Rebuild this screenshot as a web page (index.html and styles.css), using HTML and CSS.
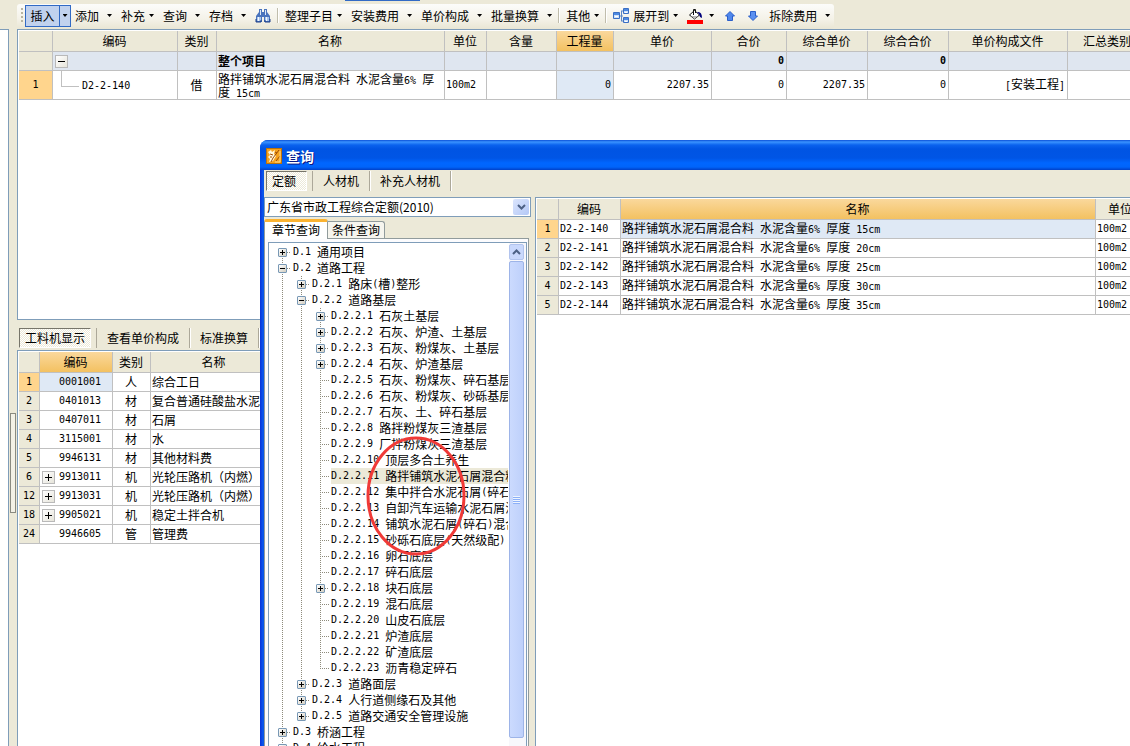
FILE: index.html
```html
<!DOCTYPE html>
<html lang="zh-CN">
<head>
<meta charset="utf-8">
<title>查询</title>
<link rel="stylesheet" href="styles.css">
</head>
<body>
<div class="app">
  <aside class="side"></aside>
  <div class="gutter"><div class="splitter"></div></div>
  <main class="work">
    <header class="top">
      <div class="toolbar">
        <span class="grip"></span>
        <div class="split"><button class="split-main">插入</button><button class="split-drop" aria-label="插入选项"><i class="arrow"></i></button></div>
        <button class="tool wide">添加<i class="arrow"></i></button>
        <button class="tool">补充<i class="arrow"></i></button>
        <button class="tool wide">查询<i class="arrow"></i></button>
        <button class="tool wide">存档<i class="arrow"></i></button>
        <button class="tool" aria-label="查找"><svg width="16" height="16" viewBox="0 0 16 16"><path d="M4 1h3v3h2V1h3v3l3 4v6H9V9H7v5H1V8l3-4z" fill="#4a74bd"/><path d="M2 9h4v4H2zM10 9h4v4h-4z" fill="#a9c5ea"/><path d="M5 2h1v5H5zM10 2h1v5h-1z" fill="#dbe8f8"/><path d="M1 11v3h5v-2M10 12v2h5v-3" fill="none" stroke="#1c3f87"/><path d="M3 9h1v4H3zM11 9h1v4h-1z" fill="#f2f7ff"/></svg></button>
        <span class="sep"></span>
        <button class="tool">整理子目<i class="arrow"></i></button>
        <button class="tool wide">安装费用<i class="arrow"></i></button>
        <button class="tool wide">单价构成<i class="arrow"></i></button>
        <button class="tool wide">批量换算<i class="arrow"></i></button>
        <span class="sep"></span>
        <button class="tool">其他<i class="arrow"></i></button>
        <span class="sep"></span>
        <button class="tool"><svg width="16" height="16" viewBox="0 0 16 16"><path d="M6 8h4M8.500 3v10M8 3h3M8 13h3" fill="none" stroke="#5b86c8"/><g fill="#cfe2fa" stroke="#3a6fc4"><path d="M.5 4.500h6v6h-6zM10.500.500h5v5h-5zM10.500 9.500h5v5h-5z"/></g><path d="M1 5h5v2H1zM11 1h4v2h-4zM11 10h4v2h-4z" fill="#4f8ae0"/><path d="M2 8h3v1H2zM12 4h2v1h-2zM12 13h2v1h-2z" fill="#fff"/></svg>展开到<i class="arrow"></i></button>
        <button class="tool color" aria-label="填充颜色"><svg width="16" height="16" viewBox="0 0 16 16"><path d="M2.500 7l5-4.500 5 4.500-5 4z" fill="#fff" stroke="#111"/><path d="M4 8h7l-3.500 3z" fill="#b8b8b8"/><path d="M6.500 7V1.500h2V5" fill="none" stroke="#111"/><path d="M10 4q5-1 5 6l-2-1q0-3-3-5z" fill="#00007b"/><path d="M0 12h16v4H0z" fill="#f00"/></svg><i class="arrow"></i></button>
        <button class="tool nav" aria-label="上移"><svg width="14" height="12" viewBox="0 0 14 12"><path d="M7 1.500l4.500 4.500H9.500v4.500h-5V6H2.500z" fill="#4f87ec" stroke="#2b5fc9"/></svg></button>
        <button class="tool nav" aria-label="下移"><svg width="14" height="12" viewBox="0 0 14 12"><path d="M7 10.500L2.500 6h2V1.500h5V6h2z" fill="#5b90f0" stroke="#2b5fc9"/></svg></button>
        <button class="tool wide">拆除费用<i class="arrow"></i></button>
      </div>
    </header>
    <section class="pane upper">
      <table class="grid project">
        <colgroup><col class="w34"><col class="w125"><col class="w39"><col class="w228"><col class="w42"><col class="w70"><col class="w57"><col class="w98"><col class="w75"><col class="w81"><col class="w81"><col class="w119"><col class="w80"></colgroup>
        <thead><tr><th></th><th>编码</th><th>类别</th><th>名称</th><th>单位</th><th>含量</th><th class="hot">工程量</th><th>单价</th><th>合价</th><th>综合单价</th><th>综合合价</th><th>单价构成文件</th><th>汇总类别</th></tr></thead>
        <tbody>
          <tr class="total"><td class="no"></td><td><button class="fold minus" aria-label="折叠"></button></td><td></td><td>整个项目</td><td></td><td></td><td></td><td></td><td class="num">0</td><td></td><td class="num">0</td><td></td><td></td></tr>
          <tr class="item"><td class="no cur">1</td><td class="child"><span class="l">D2-2-140</span></td><td class="mid">借</td><td class="wrap">路拌铺筑水泥石屑混合料<span class="l"> </span>水泥含量<span class="l">6% </span>厚度<span class="l"> 15cm</span></td><td class="l">100m2</td><td></td><td class="num sel">0</td><td class="num">2207.35</td><td class="num">0</td><td class="num">2207.35</td><td class="num">0</td><td class="right"><span class="l">[</span>安装工程<span class="l">]</span></td><td></td></tr>
        </tbody>
      </table>
    </section>
    <nav class="tabs low"><button class="tab on">工料机显示</button><button class="tab">查看单价构成</button><button class="tab">标准换算</button></nav>
    <section class="pane lower">
      <table class="grid parts">
        <colgroup><col class="w21"><col class="w73"><col class="w38"><col class="w127"></colgroup>
        <thead><tr><th></th><th class="hot">编码</th><th>类别</th><th>名称</th></tr></thead>
        <tbody>
          <tr><td class="no cur">1</td><td class="code sel">0001001</td><td class="mid">人</td><td>综合工日</td></tr>
          <tr><td class="no">2</td><td class="code">0401013</td><td class="mid">材</td><td>复合普通硅酸盐水泥</td></tr>
          <tr><td class="no">3</td><td class="code">0407011</td><td class="mid">材</td><td>石屑</td></tr>
          <tr><td class="no">4</td><td class="code">3115001</td><td class="mid">材</td><td>水</td></tr>
          <tr><td class="no">5</td><td class="code">9946131</td><td class="mid">材</td><td>其他材料费</td></tr>
          <tr><td class="no">6</td><td class="code"><button class="fold plus" aria-label="展开"></button>9913011</td><td class="mid">机</td><td>光轮压路机（内燃）</td></tr>
          <tr><td class="no">12</td><td class="code"><button class="fold plus" aria-label="展开"></button>9913031</td><td class="mid">机</td><td>光轮压路机（内燃）</td></tr>
          <tr><td class="no">18</td><td class="code"><button class="fold plus" aria-label="展开"></button>9905021</td><td class="mid">机</td><td>稳定土拌合机</td></tr>
          <tr><td class="no">24</td><td class="code">9946605</td><td class="mid">管</td><td>管理费</td></tr>
        </tbody>
      </table>
    </section>
  </main>
</div>
<span class="accent"></span>

<div class="dialog" role="dialog" aria-labelledby="dialog-title">
  <header class="title">
    <svg width="16" height="16" viewBox="0 0 16 16"><path d="M0 0h16v16H0z" fill="#b9720c"/><path d="M1 1h14v14H1z" fill="#f6a21c"/><path d="M2 4l3-2 1 2 3-2-1 4 2 2-3 5-4 1 1-3-2-2 2-2z" fill="#fff7dc"/><path d="M13 2L7 10l-2 4M4 6l3 1M4 9l2 0M10 13l4-5M9 4l2 1" fill="none" stroke="#9a4a06"/><path d="M14 3v11H9" fill="none" stroke="#fbd98a"/></svg>
    <h1 id="dialog-title">查询</h1>
  </header>
  <div class="frame">
    <nav class="tabs high"><button class="tab on">定额</button><button class="tab">人材机</button><button class="tab">补充人材机</button></nav>
    <div class="body">
      <div class="left">
        <label class="combo"><select aria-label="定额库"><option>广东省市政工程综合定额(2010)</option></select><span class="drop"><svg width="9" height="6" viewBox="0 0 9 6"><path d="M1 1l3.500 3.500L8 1" fill="none" stroke="#4d6185" stroke-width="2"/></svg></span></label>
        <div class="pages"><button class="page on">章节查询</button><button class="page">条件查询</button></div>
        <div class="sheet">
          <div class="treebox">
            <ul class="tree">
              <li><div class="row"><button class="box"></button><i class="dots"></i><span class="l">D.1 </span>通用项目</div></li>
              <li><div class="row"><button class="box open"></button><i class="dots"></i><span class="l">D.2 </span>道路工程</div>
                <ul>
                  <li><div class="row"><button class="box"></button><i class="dots"></i><span class="l">D.2.1 </span>路床<span class="l">(</span>槽<span class="l">)</span>整形</div></li>
                  <li><div class="row"><button class="box open"></button><i class="dots"></i><span class="l">D.2.2 </span>道路基层</div>
                    <ul>
                      <li><div class="row"><button class="box"></button><i class="dots"></i><span class="l">D.2.2.1 </span>石灰土基层</div></li>
                      <li><div class="row"><button class="box"></button><i class="dots"></i><span class="l">D.2.2.2 </span>石灰、炉渣、土基层</div></li>
                      <li><div class="row"><button class="box"></button><i class="dots"></i><span class="l">D.2.2.3 </span>石灰、粉煤灰、土基层</div></li>
                      <li><div class="row"><button class="box"></button><i class="dots"></i><span class="l">D.2.2.4 </span>石灰、炉渣基层</div></li>
                      <li><div class="row"><i class="dots leaf"></i><span class="l">D.2.2.5 </span>石灰、粉煤灰、碎石基层</div></li>
                      <li><div class="row"><i class="dots leaf"></i><span class="l">D.2.2.6 </span>石灰、粉煤灰、砂砾基层</div></li>
                      <li><div class="row"><i class="dots leaf"></i><span class="l">D.2.2.7 </span>石灰、土、碎石基层</div></li>
                      <li><div class="row"><i class="dots leaf"></i><span class="l">D.2.2.8 </span>路拌粉煤灰三渣基层</div></li>
                      <li><div class="row"><i class="dots leaf"></i><span class="l">D.2.2.9 </span>厂拌粉煤灰三渣基层</div></li>
                      <li><div class="row"><i class="dots leaf"></i><span class="l">D.2.2.10 </span>顶层多合土养生</div></li>
                      <li><div class="row"><i class="dots leaf"></i><span class="picked"><span class="l">D.2.2.11 </span>路拌铺筑水泥石屑混合料</span></div></li>
                      <li><div class="row"><i class="dots leaf"></i><span class="l">D.2.2.12 </span>集中拌合水泥石屑<span class="l">(</span>碎石</div></li>
                      <li><div class="row"><i class="dots leaf"></i><span class="l">D.2.2.13 </span>自卸汽车运输水泥石屑混</div></li>
                      <li><div class="row"><i class="dots leaf"></i><span class="l">D.2.2.14 </span>铺筑水泥石屑<span class="l">(</span>碎石<span class="l">)</span>混合</div></li>
                      <li><div class="row"><i class="dots leaf"></i><span class="l">D.2.2.15 </span>砂砾石底层<span class="l">(</span>天然级配<span class="l">)</span></div></li>
                      <li><div class="row"><i class="dots leaf"></i><span class="l">D.2.2.16 </span>卵石底层</div></li>
                      <li><div class="row"><i class="dots leaf"></i><span class="l">D.2.2.17 </span>碎石底层</div></li>
                      <li><div class="row"><button class="box"></button><i class="dots"></i><span class="l">D.2.2.18 </span>块石底层</div></li>
                      <li><div class="row"><i class="dots leaf"></i><span class="l">D.2.2.19 </span>混石底层</div></li>
                      <li><div class="row"><i class="dots leaf"></i><span class="l">D.2.2.20 </span>山皮石底层</div></li>
                      <li><div class="row"><i class="dots leaf"></i><span class="l">D.2.2.21 </span>炉渣底层</div></li>
                      <li><div class="row"><i class="dots leaf"></i><span class="l">D.2.2.22 </span>矿渣底层</div></li>
                      <li><div class="row"><i class="dots leaf"></i><span class="l">D.2.2.23 </span>沥青稳定碎石</div></li>
                    </ul>
                  </li>
                  <li><div class="row"><button class="box"></button><i class="dots"></i><span class="l">D.2.3 </span>道路面层</div></li>
                  <li><div class="row"><button class="box"></button><i class="dots"></i><span class="l">D.2.4 </span>人行道侧缘石及其他</div></li>
                  <li><div class="row"><button class="box"></button><i class="dots"></i><span class="l">D.2.5 </span>道路交通安全管理设施</div></li>
                </ul>
              </li>
              <li><div class="row"><button class="box"></button><i class="dots"></i><span class="l">D.3 </span>桥涵工程</div></li>
              <li><div class="row"><button class="box"></button><i class="dots"></i><span class="l">D.4 </span>给水工程</div></li>
            </ul>
            <div class="scroll">
              <button class="scroll-up" aria-label="向上滚动"><svg width="9" height="6" viewBox="0 0 9 6"><path d="M1 5l3.500-3.500L8 5" fill="none" stroke="#4d6185" stroke-width="2"/></svg></button>
              <div class="thumb"><i class="ridges"></i></div>
            </div>
          </div>
        </div>
      </div>
      <section class="pane result">
        <table class="grid quota">
          <colgroup><col class="w22"><col class="w62"><col><col class="w50"></colgroup>
          <thead><tr><th></th><th>编码</th><th class="hot">名称</th><th>单位</th></tr></thead>
          <tbody>
            <tr><td class="no cur">1</td><td class="l">D2-2-140</td><td class="sel">路拌铺筑水泥石屑混合料<span class="l"> </span>水泥含量<span class="l">6% </span>厚度<span class="l"> 15cm</span></td><td class="l">100m2</td></tr>
            <tr><td class="no">2</td><td class="l">D2-2-141</td><td>路拌铺筑水泥石屑混合料<span class="l"> </span>水泥含量<span class="l">6% </span>厚度<span class="l"> 20cm</span></td><td class="l">100m2</td></tr>
            <tr><td class="no">3</td><td class="l">D2-2-142</td><td>路拌铺筑水泥石屑混合料<span class="l"> </span>水泥含量<span class="l">6% </span>厚度<span class="l"> 25cm</span></td><td class="l">100m2</td></tr>
            <tr><td class="no">4</td><td class="l">D2-2-143</td><td>路拌铺筑水泥石屑混合料<span class="l"> </span>水泥含量<span class="l">6% </span>厚度<span class="l"> 30cm</span></td><td class="l">100m2</td></tr>
            <tr><td class="no">5</td><td class="l">D2-2-144</td><td>路拌铺筑水泥石屑混合料<span class="l"> </span>水泥含量<span class="l">6% </span>厚度<span class="l"> 35cm</span></td><td class="l">100m2</td></tr>
          </tbody>
        </table>
      </section>
    </div>
  </div>
  <svg class="mark" width="100" height="120" viewBox="0 0 100 120"><ellipse cx="50" cy="60" rx="48" ry="58" fill="none" stroke="#f03a37" stroke-width="3"/></svg>
</div>
</body>
</html>
```
FILE: styles.css
```css
* { box-sizing: border-box; }
html, body { height: 100%; }
body {
  margin: 0;
  overflow: hidden;
  position: relative;
  background: #ece9d8;
  color: #000;
  font: 12px/16px "Noto Sans CJK SC", sans-serif;
}
button, select {
  margin: 0;
  padding: 0;
  border: 0;
  background: none;
  color: inherit;
  font: inherit;
  white-space: nowrap;
}
svg { display: block; flex: none; }

/* half-width characters, six pixels each */
.l, .num, .code, .no { font-family: "DejaVu Sans Mono", monospace; font-size: 10px; white-space: pre; }

/* application window */
.app { display: flex; height: 100%; }
.side { width: 9px; margin-top: 29px; background: #fff; border: 1px solid #7f9db9; border-left: 0; border-bottom: 0; flex: none; }
.gutter { width: 8px; flex: none; display: flex; flex-direction: column; justify-content: center; padding-top: 180px; }
.splitter { width: 6px; height: 100px; margin-left: 1px; border: 1px solid #8a8a80; background: #f3f1e6; }
.work { flex: 1; min-width: 0; display: flex; flex-direction: column; }
.accent { position: absolute; left: 345px; top: 0; width: 75px; height: 1px; background: #316ac5; }

.top { height: 29px; padding-top: 4px; flex: none; display: flex; }
.toolbar {
  display: flex;
  align-items: center;
  gap: 9px;
  padding: 0 4px 2px;
  border-radius: 3px;
  background: linear-gradient(#fcfcfa, #f4f2e8 60%, #e9e6d4);
}
.grip { width: 2px; height: 15px; margin-right: -7px; background: repeating-linear-gradient(#b8b5a2 0 2px, transparent 2px 4px); }
.split { display: flex; height: 22px; margin-right: -5px; border: 1px solid #316ac5; background: #c1d2ee; }
.split-main { width: 33px; }
.split-drop { width: 11px; border-left: 1px solid #316ac5; display: flex; align-items: center; justify-content: center; }
.arrow { width: 5px; height: 3px; background: #000; clip-path: polygon(0 0, 100% 0, 50% 100%); flex: none; }
.tool { display: flex; align-items: center; gap: 4px; height: 22px; }
.tool.wide { gap: 8px; }
.tool.color { gap: 6px; }
.sep { width: 2px; height: 15px; margin: 0 -3px; border-left: 1px solid #c0bdac; border-right: 1px solid #fff; }

.pane { background: #fff; border: 1px solid #7f9db9; border-right: 0; padding: 1px 0 0 1px; overflow: hidden; }
.upper { height: 39vh; flex: none; }
.lower { flex: 1; border-bottom: 0; }

/* grids */
.grid { table-layout: fixed; border-collapse: separate; border-spacing: 0; }
.grid th, .grid td {
  height: 19px;
  padding: 0 2px 0 1px;
  border-right: 1px solid #c0c0c0;
  border-bottom: 1px solid #c0c0c0;
  font-weight: 400;
  line-height: 16px;
  text-align: left;
  white-space: nowrap;
  overflow: hidden;
}
.grid th { height: 21px; background: #ece9d8; text-align: center; }
.grid th.hot { background: linear-gradient(#fad89c, #f3c161); }
.grid td.no { background: #ece9d8; text-align: center; padding: 0; }
.grid td.no.cur { background: #ffd58d; }
.grid td.sel { background: #dfe9f5; }
.grid td.mid { text-align: center; }
.grid td.num, .grid td.right { text-align: right; }
.grid td.code { padding-left: 19px; position: relative; }
.grid tr.total td { background: #dfe6f0; font-weight: 700; }
.grid tr.total td.no { background: #ece9d8; }
.grid tr.item td { height: 29px; }
.grid tr.item td.wrap { white-space: normal; line-height: 13px; }
.wrap .l { line-height: 1px; }
.project { width: 1129px; }
.parts { width: 259px; }
.quota { width: calc(100% + 16px); }
.w21 { width: 21px; } .w22 { width: 22px; } .w34 { width: 34px; } .w38 { width: 38px; }
.w39 { width: 39px; } .w42 { width: 42px; } .w50 { width: 50px; } .w57 { width: 57px; }
.w62 { width: 62px; } .w70 { width: 70px; } .w73 { width: 73px; } .w75 { width: 75px; }
.w80 { width: 80px; } .w81 { width: 81px; } .w98 { width: 98px; } .w119 { width: 119px; }
.w125 { width: 125px; } .w127 { width: 127px; } .w228 { width: 228px; }

.fold {
  display: block;
  width: 13px;
  height: 13px;
  margin-left: 1px;
  border: 1px solid #b9b9b9;
  background:
    linear-gradient(#000, #000) center / 7px 1px no-repeat,
    linear-gradient(135deg, #fff, #e6e4da);
}
.fold.plus {
  position: absolute;
  left: 1px;
  top: 3px;
  background:
    linear-gradient(#000, #000) center / 7px 1px no-repeat,
    linear-gradient(#000, #000) center / 1px 7px no-repeat,
    linear-gradient(135deg, #fff, #e6e4da);
}
.grid td.child { padding-left: 29px; position: relative; }
.child::before {
  content: "";
  position: absolute;
  left: 8px;
  top: 0;
  width: 17px;
  height: 15px;
  border-left: 1px solid #c0c0c0;
  border-bottom: 1px solid #c0c0c0;
}

/* flat tab strips */
.tabs { display: flex; align-items: center; flex: none; }
.low { height: 30px; padding: 6px 0 0 2px; }
.high { height: 27px; padding: 0 0 6px 2px; }
.tab { height: 20px; padding: 0 10px; border-right: 1px solid #aca899; box-shadow: 1px 0 0 #fff; }
.tab.on {
  margin-right: 6px;
  padding: 0 5px;
  border: 1px solid;
  border-color: #77756a #fff #fff #77756a;
  background: repeating-conic-gradient(#fff 0 25%, #ece9d8 0 50%) 0 0 / 2px 2px;
  box-shadow: none;
  position: relative;
}
.high .tab.on { padding-right: 10px; }
.tab.on::after { content: ""; position: absolute; right: -7px; top: -1px; width: 1px; height: 20px; background: #aca899; }

/* query dialog */
.dialog {
  position: absolute;
  left: 260px;
  top: 140px;
  right: 0;
  bottom: 0;
  display: flex;
  flex-direction: column;
  border-radius: 8px 0 0 0;
  background: linear-gradient(90deg, #0831d9, #0a58ee 3px, #0855dd 4px);
  overflow: hidden;
}
.title {
  height: 30px;
  flex: none;
  display: flex;
  align-items: center;
  gap: 4px;
  padding: 2px 0 0 6px;
  background: linear-gradient(#0a4fd8, #3a93ff 2px, #0a62ee 5px, #0054e3 9px, #0055e5 18px, #0066ff 23px, #0064fa 27px, #0040c8 30px);
}
.title h1 { margin: 0; color: #fff; font-size: 14px; line-height: 20px; font-weight: 700; text-shadow: 1px 1px 0 #0a1883; }
.frame { flex: 1; min-height: 0; margin-left: 4px; background: #ece9d8; display: flex; flex-direction: column; }
.body { flex: 1; min-height: 0; display: flex; gap: 4px; }
.left { width: 267px; flex: none; display: flex; flex-direction: column; }
.combo { display: flex; align-items: center; height: 20px; flex: none; border: 1px solid #7f9db9; background: #fff; padding-right: 1px; }
.combo select { appearance: none; flex: 1; padding-left: 2px; outline: 0; }
.drop { width: 16px; height: 16px; display: flex; align-items: center; justify-content: center; border-radius: 2px; background: linear-gradient(135deg, #dbe5fd, #b4c8f6); pointer-events: none; }
.pages { display: flex; align-items: flex-end; height: 21px; padding-top: 2px; flex: none; }
.page { height: 17px; width: 57px; border: 1px solid #919b9c; border-bottom: 0; border-left: 0; border-radius: 0 3px 0 0; background: #f6f5ee; }
.page.on { height: 20px; width: 64px; border-top: 3px solid #fbb331; border-left: 1px solid #919b9c; border-radius: 3px 3px 0 0; background: #fff; margin-bottom: -1px; padding-bottom: 3px; position: relative; }
.sheet { flex: 1; min-height: 0; margin-right: 2px; padding: 3px 1px 0 3px; border: 1px solid #919b9c; border-bottom: 0; background: #fcfcfe; display: flex; }
.treebox { flex: 1; min-width: 0; display: flex; border: 1px solid #7f9db9; border-bottom: 0; background: #fff; }
.scroll { width: 17px; flex: none; display: flex; flex-direction: column; align-items: flex-start; gap: 1px; padding: 1px 0 8px; background: #f7f7fb; }
.scroll-up { width: 15px; height: 16px; flex: none; border-radius: 2px; border: 1px solid #b2c4ee; background: #c9d8fc; display: flex; align-items: center; justify-content: center; }
.thumb { width: 15px; flex: 1; border: 1px solid #9db4e8; border-radius: 2px; background: linear-gradient(90deg, #cbdafe, #bed0fb); display: flex; align-items: center; justify-content: center; }
.ridges { width: 7px; height: 8px; background: repeating-linear-gradient(#eef4fe 0 1px, #8cb0f8 1px 2px); }

/* chapter tree */
.tree, .tree ul { margin: 0; padding: 0; list-style: none; }
.tree { flex: 1; min-width: 0; overflow: hidden; padding: 1px 0 0 9px; margin-right: 1px; }
.tree ul { margin-left: 19px; }
.tree li { position: relative; }
.tree li::before {
  content: "";
  position: absolute;
  left: 4px;
  top: 0;
  bottom: 0;
  width: 1px;
  background: repeating-linear-gradient(#8e8b7c 0 1px, transparent 1px 2px);
}
.tree > li:first-child::before { top: 8px; }
.tree ul > li:last-child::before { bottom: 8px; }
.row { display: flex; align-items: center; height: 16px; white-space: nowrap; }
.box {
  width: 9px;
  height: 9px;
  flex: none;
  position: relative;
  border: 1px solid #7898b5;
  border-radius: 1px;
  background:
    linear-gradient(#000, #000) center / 5px 1px no-repeat,
    linear-gradient(#000, #000) center / 1px 5px no-repeat,
    linear-gradient(135deg, #fff, #d2cdbf);
}
.box.open { background: linear-gradient(#000, #000) center / 5px 1px no-repeat, linear-gradient(135deg, #fff, #d2cdbf); }
.dots { width: 4px; height: 1px; margin-right: 2px; flex: none; background: repeating-linear-gradient(90deg, #8e8b7c 0 1px, transparent 1px 2px); }
.dots.leaf { width: 9px; margin-left: 4px; }
.picked { display: flex; align-items: center; background: #ece9d8; }

.result { flex: 1; min-width: 0; border-bottom: 0; }
.mark { position: absolute; left: 106px; top: 296px; pointer-events: none; }
```
